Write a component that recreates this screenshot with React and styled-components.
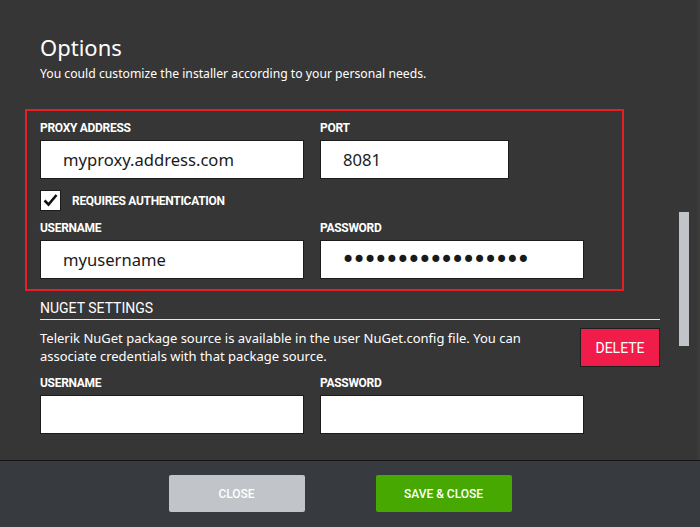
import React, { Component } from 'react'
import styled, { createGlobalStyle } from 'styled-components'

const GlobalStyle = createGlobalStyle`
    html, body {
        margin: 0;
        padding: 0;
        background: #363636;
    }
`

const Page = styled.div`
    position: relative;
    width: 700px;
    height: 527px;
    background: #363636;
    display: flex;
    flex-direction: column;
    overflow: hidden;
    font-family: 'Noto Sans', 'Open Sans', sans-serif;
    color: #ffffff;
`

const Content = styled.div`
    flex: 1;
    padding: 31px 0 0 40px;
    border-right: 3px solid #3b3b3b;
`

const Title = styled.h1`
    margin: 0;
    font-size: 22px;
    font-weight: 400;
    line-height: 32px;
`

const Subtitle = styled.p`
    margin: 2px 0 0;
    font-size: 12.2px;
    line-height: 18px;
`

const ProxyBox = styled.div`
    margin: 26px 0 0 -15px;
    width: 569px;
    padding: 10px 13px 10px 13px;
    border: 2px solid #e81e26;
    display: flex;
    flex-direction: column;
`

const Row = styled.div`
    display: flex;
    gap: 16px;
`

const Field = styled.div`
    display: flex;
    flex-direction: column;
    width: ${props => props.width || 264}px;
`

const Label = styled.label`
    font-family: Roboto, 'Liberation Sans', sans-serif;
    font-weight: 700;
    font-size: 12px;
    line-height: 14px;
    letter-spacing: -0.3px;
    margin-bottom: 5px;
`

const InputText = styled.input`
    box-sizing: border-box;
    height: 39px;
    width: 100%;
    border: 1px solid #1c1c1c;
    background: #ffffff;
    padding: 0 0 0 22px;
    font-family: 'Noto Sans', 'Open Sans', sans-serif;
    font-size: 16.6px;
    color: #1a1a1a;
    outline: none;
`

const PasswordInput = styled(InputText)`
    font-family: 'DejaVu Sans', sans-serif;
    font-size: 24px;
    letter-spacing: -3.2px;
    padding-left: 20px;
`

const CheckRow = styled.label`
    display: flex;
    align-items: center;
    gap: 11px;
    margin: 11px 0 10px;
    font-family: Roboto, 'Liberation Sans', sans-serif;
    font-weight: 700;
    font-size: 12px;
    letter-spacing: -0.3px;
`

const CheckBox = styled.span`
    box-sizing: border-box;
    width: 21px;
    height: 21px;
    background: #ffffff;
    border: 1px solid #1c1c1c;
    display: flex;
    align-items: center;
    justify-content: center;
`

const Section = styled.div`
    width: 620px;
    margin-top: 8px;
`

const SectionTitle = styled.h2`
    margin: 0;
    font-family: Roboto, 'Liberation Sans', sans-serif;
    font-weight: 400;
    font-size: 14px;
    line-height: 18px;
    padding-bottom: 2px;
    border-bottom: 1px solid #e6e6e6;
`

const InfoRow = styled.div`
    display: flex;
    justify-content: space-between;
    align-items: flex-start;
    margin-top: 8px;
    margin-bottom: 9px;
`

const InfoText = styled.p`
    margin: 1px 0 0;
    width: 520px;
    font-size: 13px;
    line-height: 18px;
`

const DeleteButton = styled.button`
    box-sizing: border-box;
    width: 80px;
    height: 39px;
    background: #f01d4b;
    border: 1px solid #1e1e1e;
    color: #ffffff;
    font-family: Roboto, 'Liberation Sans', sans-serif;
    font-size: 14px;
    cursor: pointer;
`

const ScrollThumb = styled.div`
    position: absolute;
    left: 679px;
    top: 212px;
    width: 10px;
    height: 134px;
    background: #c1c5c9;
`

const Footer = styled.div`
    height: 67px;
    border-top: 1px solid #141414;
    background: #373a3e;
    display: flex;
    justify-content: center;
    align-items: flex-start;
    gap: 71px;
    padding-top: 14px;
    box-sizing: border-box;
    padding-right: 20px;
`

const FooterButton = styled.button`
    width: 136px;
    height: 37px;
    border: none;
    border-radius: 2px;
    background: ${props => (props.primary ? '#46a800' : '#c1c5c9')};
    color: #ffffff;
    font-family: Roboto, 'Liberation Sans', sans-serif;
    font-size: 12px;
    font-weight: 500;
    cursor: pointer;
`

class App extends Component {
    constructor(props) {
        super(props)

        this.state = {
            proxy: 'myproxy.address.com',
            port: '8081',
            auth: true,
            username: 'myusername',
            password: 'passwordpassword1',
            nugetUser: '',
            nugetPassword: '',
        }
    }

    handleChange = key => event => {
        this.setState({ [key]: event.target.value })
    }

    toggleAuth = () => {
        this.setState({ auth: !this.state.auth })
    }

    render() {
        const { proxy, port, auth, username, password, nugetUser, nugetPassword } = this.state

        return (
            <Page>
                <GlobalStyle />
                <Content>
                    <Title>Options</Title>
                    <Subtitle>You could customize the installer according to your personal needs.</Subtitle>

                    <ProxyBox>
                        <Row>
                            <Field>
                                <Label>PROXY ADDRESS</Label>
                                <InputText type="text" value={proxy} onChange={this.handleChange('proxy')} />
                            </Field>
                            <Field width={189}>
                                <Label>PORT</Label>
                                <InputText type="text" value={port} onChange={this.handleChange('port')} />
                            </Field>
                        </Row>

                        <CheckRow onClick={this.toggleAuth}>
                            <CheckBox>
                                {auth && (
                                    <svg width="17" height="17" viewBox="0 0 17 17">
                                        <path d="M2.5 8.5 L6.5 12.5 L14.5 3" fill="none" stroke="#111" strokeWidth="2.6" />
                                    </svg>
                                )}
                            </CheckBox>
                            REQUIRES AUTHENTICATION
                        </CheckRow>

                        <Row>
                            <Field>
                                <Label>USERNAME</Label>
                                <InputText type="text" value={username} onChange={this.handleChange('username')} />
                            </Field>
                            <Field>
                                <Label>PASSWORD</Label>
                                <PasswordInput type="password" value={password} onChange={this.handleChange('password')} />
                            </Field>
                        </Row>
                    </ProxyBox>

                    <Section>
                        <SectionTitle>NUGET SETTINGS</SectionTitle>
                        <InfoRow>
                            <InfoText>
                                Telerik NuGet package source is available in the user NuGet.config file. You can
                                associate credentials with that package source.
                            </InfoText>
                            <DeleteButton>DELETE</DeleteButton>
                        </InfoRow>
                        <Row>
                            <Field>
                                <Label>USERNAME</Label>
                                <InputText type="text" value={nugetUser} onChange={this.handleChange('nugetUser')} />
                            </Field>
                            <Field>
                                <Label>PASSWORD</Label>
                                <PasswordInput type="password" value={nugetPassword} onChange={this.handleChange('nugetPassword')} />
                            </Field>
                        </Row>
                    </Section>
                </Content>

                <ScrollThumb />

                <Footer>
                    <FooterButton>CLOSE</FooterButton>
                    <FooterButton primary>SAVE &amp; CLOSE</FooterButton>
                </Footer>
            </Page>
        )
    }
}

export default App
